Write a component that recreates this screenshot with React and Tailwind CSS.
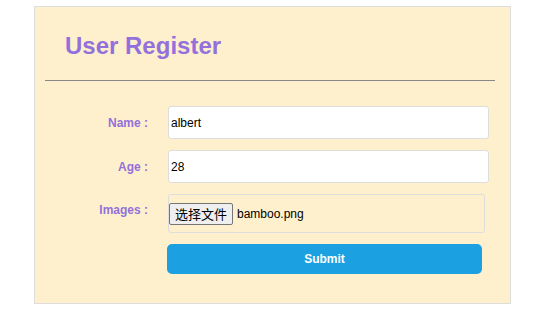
export default function App() {
  const font = { fontFamily: '"Liberation Sans", Arial, "Noto Sans CJK SC", sans-serif' };
  return (
    <div className="w-[551px] h-[314px] bg-white" style={font}>
      <div className="ml-[34px] mt-[6px] w-[477px] h-[298px] border border-[#dddddd] bg-[#fff0cd]">
        <div className="pt-[27px] pl-[30px] text-[24px] leading-[24px] font-bold text-[#9370db]">
          User Register
        </div>
        <div className="mt-[22px] ml-[10px] w-[450px] h-px bg-[#888888]" />
        <div className="mt-[25px] flex flex-col">
          <div className="flex items-center">
            <div className="w-[113px] text-right text-[12px] font-bold text-[#9370db]">Name :</div>
            <div className="ml-[20px] w-[321px] h-[33px] rounded-[3px] border border-[#dddddd] bg-white flex items-center pl-[2px] text-[12px] text-black">
              albert
            </div>
          </div>
          <div className="mt-[11px] flex items-center">
            <div className="w-[113px] text-right text-[12px] font-bold text-[#9370db]">Age :</div>
            <div className="ml-[20px] w-[321px] h-[33px] rounded-[3px] border border-[#dddddd] bg-white flex items-center pl-[2px] text-[12px] text-black">
              28
            </div>
          </div>
          <div className="mt-[11px] flex items-start">
            <div className="w-[113px] mt-[9px] text-right text-[12px] leading-[14px] font-bold text-[#9370db]">Images :</div>
            <div className="ml-[20px] w-[317px] h-[39px] rounded-[3px] border border-[#dddddd] flex items-center">
              <div className="ml-0 h-[22px] w-[64px] rounded-[2px] border border-[#767676] bg-[#efefef] flex items-center justify-center text-[13px] text-black" style={{ fontFamily: '"Noto Sans CJK SC", sans-serif' }}>
                选择文件
              </div>
              <span className="ml-[4px] text-[12px] text-black">bamboo.png</span>
            </div>
          </div>
          <div className="mt-[11px] ml-[132px] w-[315px] h-[30px] rounded-[5px] bg-[#1ba1e2] flex items-center justify-center text-[12px] font-bold text-white">
            Submit
          </div>
        </div>
      </div>
    </div>
  );
}
